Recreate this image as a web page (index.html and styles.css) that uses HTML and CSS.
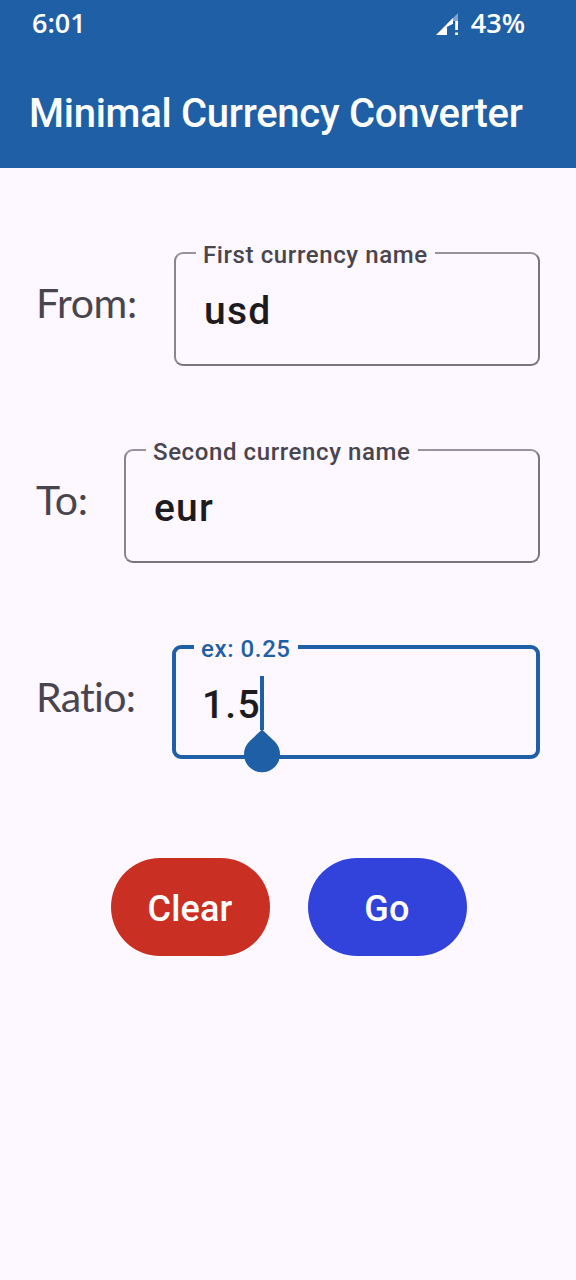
FILE: index.html
```html
<!DOCTYPE html>
<html lang="en">
<head>
<meta charset="utf-8">
<title>Minimal Currency Converter</title>
<link rel="stylesheet" href="styles.css">
</head>
<body>
<header class="header">
  <div class="status">
    <span class="clock">6:01</span>
    <svg class="signal" width="24" height="24" viewBox="0 0 24 24">
      <path d="M12 11 23 0V8H18V13L12 22Z" fill="#7fa5cf"/>
      <path d="M1 22 18 5V11L12 14V22Z" fill="#fff"/>
      <path d="M20.2 8H23V17H20.2ZM20.2 19.4H23V22H20.2Z" fill="#fff"/>
      <path d="M12 14 18 11V22H12Z" fill="#1f5fa6"/>
    </svg>
    <span class="battery">43%</span>
  </div>
  <h1 class="title">Minimal Currency Converter</h1>
</header>
<main class="form">
  <div class="row">
    <span class="caption caption-from">From:</span>
    <div class="field"><span class="hint">First currency name</span><span class="value">usd</span></div>
  </div>
  <div class="row">
    <span class="caption caption-to">To:</span>
    <div class="field"><span class="hint">Second currency name</span><span class="value">eur</span></div>
  </div>
  <div class="row">
    <span class="caption caption-ratio">Ratio:</span>
    <div class="field field-focus"><span class="hint">ex: 0.25</span><span class="value">1.5</span><span class="caret"></span>
      <svg class="handle" width="38" height="44" viewBox="0 0 38 44"><path d="M19 0.5 31.7 12.5A18 18 0 1 1 6.3 12.5Z" fill="#1f5fa6"/></svg>
    </div>
  </div>
  <div class="actions">
    <button class="button clear">Clear</button>
    <button class="button go">Go</button>
  </div>
</main>
</body>
</html>
```
FILE: styles.css
```css
* { box-sizing: border-box; }
body { margin: 0; height: 1280px; background: #fdf7ff; font-family: Roboto, sans-serif; font-weight: 500; }
.header { height: 168px; background: #1f5fa6; color: #fff; }
.status { display: flex; height: 48px; align-items: center; padding: 0 51px 0 32px; font: 600 27px/46px "Open Sans", sans-serif; }
.clock { letter-spacing: 0; height: 48px; }
.signal { margin-left: auto; margin-right: 12px; margin-top: 2px; }
.battery { letter-spacing: 0; height: 48px; }
.title { margin: 0; padding: 42px 0 0 29px; font-size: 40px; line-height: 48px; font-weight: 500; letter-spacing: -0.27px; white-space: nowrap; }
.form { padding: 84px 36px 0; }
.row { display: flex; height: 114px; margin-bottom: 83px; }
.caption { flex: none; font: 400 41px/48px Lato, sans-serif; font-variant-ligatures: none; color: #49454f; padding-top: 27px; white-space: nowrap; letter-spacing: -0.4px; }
.caption-from { width: 138px; }
.caption-to { width: 88px; }
.caption-ratio { width: 138px; letter-spacing: -0.7px; }
.field { position: relative; flex: 1; border: 2px solid #79747e; border-top-color: #97929b; border-left-color: #89848e; border-radius: 9px; padding: 34px 0 0 28px; }
.field-focus { border: 4px solid #1f5fa6; margin: -1px 0 1px -2px; padding: 33px 0 0 26px; }
.hint { position: absolute; left: 20px; top: -14px; padding: 0 7px; background: #fdf7ff; color: #49454f; font-size: 24px; line-height: 30px; letter-spacing: 0.6px; white-space: nowrap; }
.field-focus .hint { color: #1f5fa6; left: 18px; top: -15px; }
.value { display: block; font-size: 39px; line-height: 46px; letter-spacing: 1.2px; color: #1d1b20; }
.caret { position: absolute; left: 84px; top: 27px; width: 4px; height: 54px; background: #1f5fa6; }
.handle { position: absolute; left: 67px; top: 80px; }
.actions { display: flex; justify-content: center; gap: 38px; padding: 15px 0 0 1px; }
.button { width: 159px; height: 98px; border: 0; border-radius: 49px; padding: 4px 0 0; color: #fff; font: 500 36px/44px Roboto, sans-serif; letter-spacing: 0.2px; }
.clear { background: #ca2f23; }
.go { background: #3143da; }
```
